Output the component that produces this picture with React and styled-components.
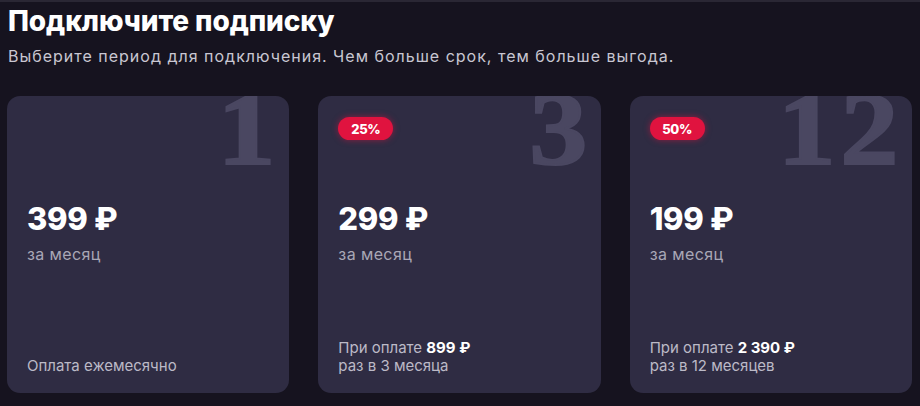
import React from "react";
import styled, { createGlobalStyle } from "styled-components";

const plans = [
    { months: "1", price: "399", note: [{ text: "Оплата ежемесячно" }] },
    {
        months: "3",
        price: "299",
        badge: "25%",
        note: [{ text: "При оплате " }, { text: "899 ₽", bold: true }, { text: "\nраз в 3 месяца" }],
    },
    {
        months: "12",
        price: "199",
        badge: "50%",
        note: [{ text: "При оплате " }, { text: "2 390 ₽", bold: true }, { text: "\nраз в 12 месяцев" }],
    },
];

const GlobalStyle = createGlobalStyle`
    html, body {
        margin: 0;
        background: #16131f;
    }
    body {
        font-family: Inter, "Noto Sans", sans-serif;
        color: #ffffff;
    }
`;

const Page = styled.div`
    width: 920px;
    height: 406px;
    box-sizing: border-box;
    border-top: 2px solid #2a2734;
    padding: 3px 8px 0 7px;
    background: #16131f;
    overflow: hidden;
`;

const Title = styled.h1`
    margin: 0 0 0 1px;
    font-size: 28px;
    line-height: 32px;
    font-weight: 800;
    letter-spacing: -0.1px;
`;

const Subtitle = styled.p`
    margin: 9px 0 0 1px;
    font-size: 16px;
    line-height: 20px;
    color: #c9c7d2;
    letter-spacing: 1px;
`;

const Plans = styled.div`
    display: grid;
    grid-template-columns: repeat(3, 1fr);
    gap: 29px;
    margin-top: 30px;
`;

const Card = styled.div`
    position: relative;
    height: 297px;
    box-sizing: border-box;
    padding: 21px 20px 18px;
    display: flex;
    flex-direction: column;
    background: #2f2c43;
    border-radius: 13px;
    overflow: hidden;
`;

// big month count in the corner, sits behind the card content
const Months = styled.span`
    position: absolute;
    top: -19px;
    right: 9px;
    font-family: "Liberation Serif", serif;
    font-weight: 700;
    font-size: 104px;
    line-height: 1;
    letter-spacing: 4px;
    color: #4a4761;
    -webkit-text-stroke: 2px #4a4761;
    transform: scaleX(1.12);
    transform-origin: right top;
`;

const BadgeRow = styled.div`
    position: relative;
    height: 23px;
`;

const Badge = styled.span`
    display: inline-flex;
    align-items: center;
    justify-content: center;
    width: 55px;
    height: 23px;
    border-radius: 12px;
    background: #e0133f;
    box-shadow: 0 0 6px rgba(224, 19, 63, 0.55);
    font-size: 13px;
    font-weight: 800;
    letter-spacing: -0.3px;
`;

const Price = styled.div`
    position: relative;
    margin-top: 61px;
    font-size: 31px;
    line-height: 36px;
    font-weight: 800;
    letter-spacing: -0.3px;
`;

const Period = styled.div`
    margin-top: 8px;
    font-size: 16px;
    line-height: 18px;
    color: #a9a7b6;
    letter-spacing: 0.4px;
`;

const Note = styled.div`
    margin-top: auto;
    font-size: 15px;
    line-height: 18px;
    color: #bcbac7;
    white-space: pre-line;
`;

const Strong = styled.b`
    color: #ffffff;
    font-weight: 700;
`;

export default function App() {
    return (
        <>
            <GlobalStyle />
            <Page>
                <Title>Подключите подписку</Title>
                <Subtitle>Выберите период для подключения. Чем больше срок, тем больше выгода.</Subtitle>
                <Plans>
                    {plans.map(plan => (
                        <Card key={plan.months}>
                            <Months>{plan.months}</Months>
                            <BadgeRow>{plan.badge && <Badge>{plan.badge}</Badge>}</BadgeRow>
                            <Price>{plan.price} ₽</Price>
                            <Period>за месяц</Period>
                            <Note>
                                {plan.note.map((part, i) =>
                                    part.bold ? <Strong key={i}>{part.text}</Strong> : <span key={i}>{part.text}</span>
                                )}
                            </Note>
                        </Card>
                    ))}
                </Plans>
            </Page>
        </>
    );
}
